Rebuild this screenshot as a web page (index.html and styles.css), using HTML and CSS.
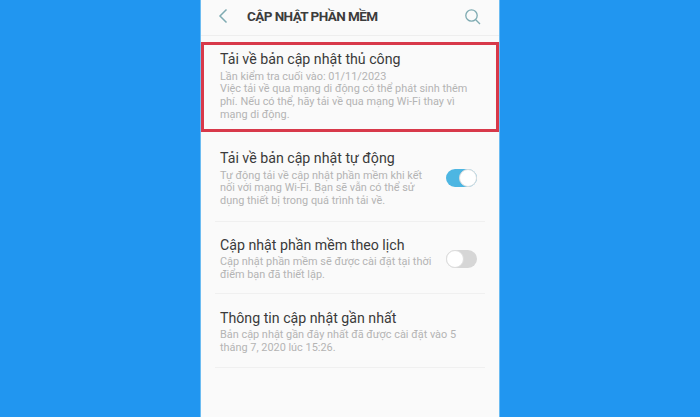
FILE: index.html
```html
<!DOCTYPE html>
<html lang="vi">
<head>
<meta charset="utf-8">
<title>Cập nhật phần mềm</title>
<link rel="stylesheet" href="styles.css">
</head>
<body>
<main class="phone">
  <header class="bar">
    <svg class="back" width="10" height="16" viewBox="0 0 10 16"><path d="M8.500 1.500 2 8l6.500 6.500" fill="none" stroke="#7fabb2" stroke-width="1.500"/></svg>
    <h1 class="title">CẬP NHẬT PHẦN MỀM</h1>
    <svg class="search" width="17" height="17" viewBox="0 0 17 17"><circle cx="7.500" cy="7.500" r="5.700" fill="none" stroke="#7fabb2" stroke-width="1.300"/><path d="m11.700 11.700 4.300 4.300" stroke="#7fabb2" stroke-width="1.300"/></svg>
  </header>
  <section class="manual">
    <h2>Tải về bản cập nhật thủ công</h2>
    <p>Lần kiểm tra cuối vào: 01/11/2023<br>Việc tải về qua mạng di động có thể phát sinh thêm phí. Nếu có thể, hãy tải về qua mạng Wi-Fi thay vì mạng di động.</p>
  </section>
  <section class="item row auto">
    <div class="text">
      <h2>Tải về bản cập nhật tự động</h2>
      <p>Tự động tải về cập nhật phần mềm khi kết nối với mạng Wi-Fi. Bạn sẽ vẫn có thể sử dụng thiết bị trong quá trình tải về.</p>
    </div>
    <span class="toggle on"></span>
  </section>
  <section class="item row sched">
    <div class="text">
      <h2>Cập nhật phần mềm theo lịch</h2>
      <p>Cập nhật phần mềm sẽ được cài đặt tại thời điểm bạn đã thiết lập.</p>
    </div>
    <span class="toggle"></span>
  </section>
  <section class="item last">
    <h2>Thông tin cập nhật gần nhất</h2>
    <p>Bản cập nhật gần đây nhất đã được cài đặt vào 5 tháng 7, 2020 lúc 15:26.</p>
  </section>
</main>
</body>
</html>
```
FILE: styles.css
```css
html, body { margin: 0; height: 100%; }
body {
  background: #2196f0;
  font-family: "Roboto", "Liberation Sans", sans-serif;
  overflow: hidden;
}
.phone {
  box-sizing: border-box;
  width: 300px;
  height: 417px;
  margin-left: 200px;
  background: #fafafa;
  border-left: 1px solid #6cbcf2;
  border-right: 1px solid #6cbcf2;
}
.bar {
  box-sizing: border-box;
  display: flex;
  align-items: center;
  height: 36px;
  padding: 0 18px 3px 17px;
  border-bottom: 1px solid #eeeeee;
}
.title {
  margin: 0 0 0 19px;
  flex: 1;
  font-size: 13.500px;
  font-weight: 700;
  color: #3c3c3c;
  letter-spacing: -0.58px;
}
h2 {
  margin: 0 0 2.500px;
  font-size: 14.200px;
  line-height: 18px;
  font-weight: 400;
  color: #3a3a3a;
}
p {
  margin: 0;
  font-size: 10.900px;
  line-height: 12.800px;
  color: #b4b4b4;
}
.manual {
  box-sizing: border-box;
  margin-top: 6px;
  height: 90px;
  padding: 5px 24px 0 16px;
  border: 3px solid #d8394a;
}
.item {
  margin: 0 14px;
  padding: 0 5px;
  border-bottom: 1px solid #f0f0f0;
}
.row { display: flex; align-items: center; justify-content: space-between; }
.text { width: 215px; }
.auto { padding-top: 17px; padding-bottom: 13px; }
.sched { padding-top: 14px; padding-bottom: 11px; }
.last { padding: 15px 12px 12px 5px; }
.toggle {
  position: relative;
  display: block;
  width: 31px;
  height: 18px;
  border-radius: 9px;
  background: #d6d6d6;
  margin-right: 3px;
}
.toggle::after {
  content: "";
  position: absolute;
  left: 0;
  top: 0;
  width: 16px;
  height: 16px;
  border: 1px solid #dddddd;
  border-radius: 50%;
  background: #fff;
}
.toggle.on { background: #4db6e2; }
.toggle.on::after { left: 13px; }
```
